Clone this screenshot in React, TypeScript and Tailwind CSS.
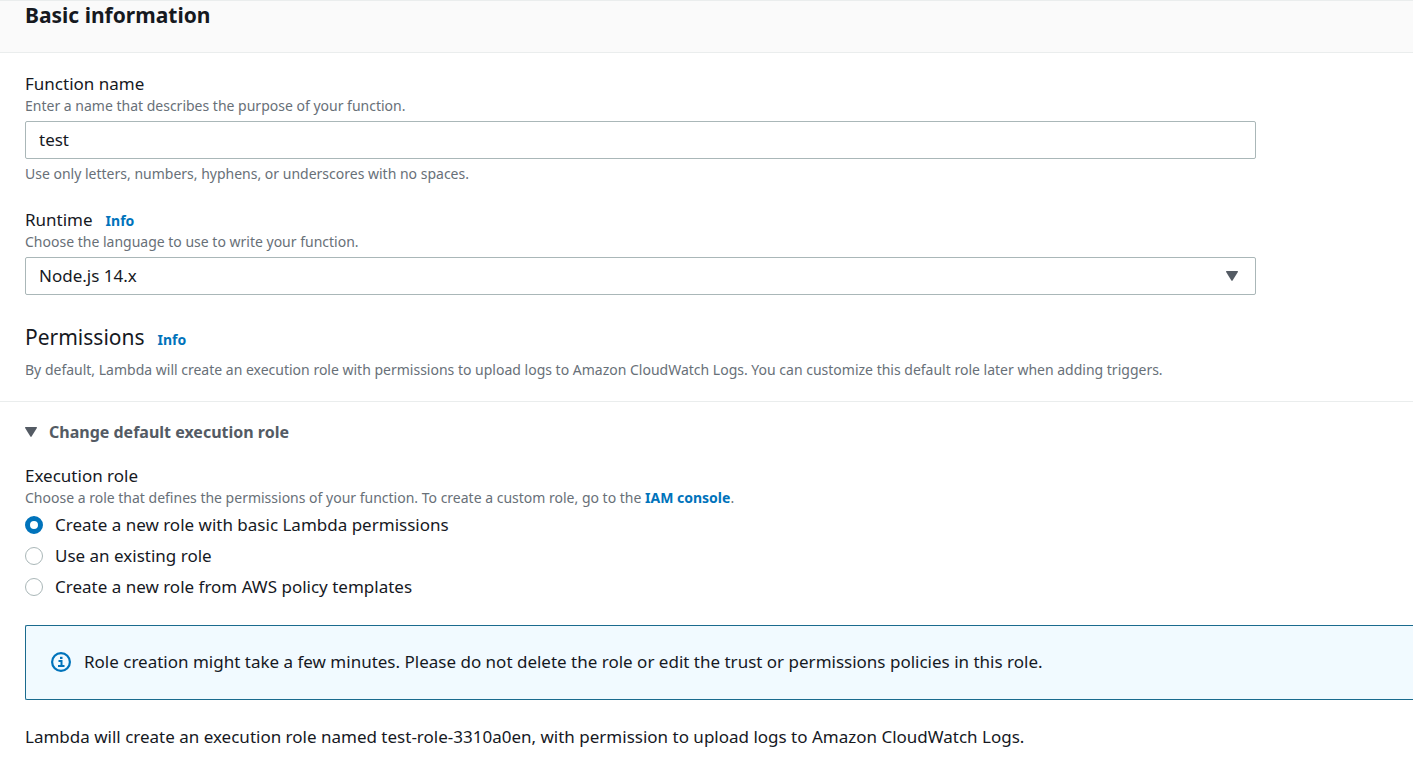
import { useState } from "react";
import type { ReactNode } from "react";

const roleOptions = [
  { id: "basic", label: "Create a new role with basic Lambda permissions" },
  { id: "existing", label: "Use an existing role" },
  { id: "template", label: "Create a new role from AWS policy templates" },
];

const runtimes = ["Node.js 14.x", "Node.js 12.x", "Python 3.9", "Java 11"];

function InfoLink() {
  return (
    <a href="#info" className="text-sm leading-[22px] font-bold text-[#0073bb]">
      Info
    </a>
  );
}

function Hint({ id, children }: { id?: string; children: ReactNode }) {
  return (
    <p id={id} className="text-sm leading-[22px] text-[#687078]">
      {children}
    </p>
  );
}

function Caret() {
  return (
    <svg width="12" height="12" viewBox="0 0 12 12" fill="#545b64" aria-hidden="true">
      <path d="M.6 1h10.8c.5 0 .7.5.5.9L6.6 10.6c-.3.4-.9.4-1.2 0L.1 1.9C-.1 1.5.1 1 .6 1z" />
    </svg>
  );
}

function InfoIcon() {
  return (
    <svg width="20" height="20" viewBox="0 0 20 20" fill="none" stroke="#0073bb" aria-hidden="true">
      <circle cx="10" cy="10" r="8.9" strokeWidth="2.2" />
      <path d="M7.5 9h3v5M7 14h6.5" strokeWidth="2" />
      <path d="M9 5.9h2.5" strokeWidth="2.2" />
    </svg>
  );
}

function App() {
  const [name, setName] = useState("test");
  const [runtime, setRuntime] = useState(runtimes[0]);
  const [role, setRole] = useState("basic");
  const [open, setOpen] = useState(true);

  return (
    <div className="min-h-screen bg-white font-['Noto_Sans',sans-serif] text-[17px] leading-[22px] text-[#16191f]">
      <header className="border-t border-b border-[#eaeded] bg-[#fafafa] px-[25px] pb-[23px]">
        <h2 className="text-[21px] leading-7 font-bold">Basic information</h2>
      </header>

      <section className="flex flex-col gap-6 px-[25px] pt-5">
        <div>
          <label htmlFor="name" className="block">
            Function name
          </label>
          <Hint id="name-desc">Enter a name that describes the purpose of your function.</Hint>
          <input
            id="name"
            type="text"
            aria-describedby="name-desc"
            className="my-1 block h-[38px] w-full max-w-[1231px] rounded-xs border border-[#aab7b8] px-[13px] pb-0.5 outline-none"
            value={name}
            onChange={(e) => setName(e.target.value)}
          />
          <Hint>Use only letters, numbers, hyphens, or underscores with no spaces.</Hint>
        </div>

        <div>
          <div className="flex h-[22px] items-baseline gap-[13px]">
            <label htmlFor="runtime">Runtime</label>
            <InfoLink />
          </div>
          <Hint>Choose the language to use to write your function.</Hint>
          <div className="mt-1 grid max-w-[1231px] items-center">
            <select
              id="runtime"
              className="col-start-1 row-start-1 h-[38px] w-full appearance-none rounded-xs border border-[#aab7b8] bg-white px-[13px] outline-none"
              value={runtime}
              onChange={(e) => setRuntime(e.target.value)}
            >
              {runtimes.map((r) => (
                <option key={r}>{r}</option>
              ))}
            </select>
            <span className="pointer-events-none col-start-1 row-start-1 mr-[18px] justify-self-end">
              <Caret />
            </span>
          </div>
        </div>
      </section>

      <section className="mt-[26px] border-b border-[#eaeded] px-[25px] pb-5">
        <div className="flex items-baseline gap-[13px]">
          <h3 className="text-[21px] leading-8">Permissions</h3>
          <InfoLink />
        </div>
        <div className="mt-1.5">
          <Hint>
            By default, Lambda will create an execution role with permissions to upload logs to
            Amazon CloudWatch Logs. You can customize this default role later when adding triggers.
          </Hint>
        </div>
      </section>

      <section className="pt-[19px] pb-6 pl-[25px]">
        <button
          type="button"
          aria-expanded={open}
          className="flex items-center gap-3 text-base leading-[22px] font-bold text-[#545b64]"
          onClick={() => setOpen(!open)}
        >
          <Caret />
          Change default execution role
        </button>

        {open && (
          <>
            <fieldset className="mt-[22px]">
              <legend>Execution role</legend>
              <Hint>
                Choose a role that defines the permissions of your function. To create a custom
                role, go to the{" "}
                <a href="#iam" className="font-bold text-[#0073bb]">
                  IAM console
                </a>
                .
              </Hint>
              <div className="mt-[5px] flex flex-col gap-[9px]">
                {roleOptions.map((o) => (
                  <label key={o.id} className="flex items-center gap-3">
                    <input
                      type="radio"
                      name="role"
                      className="size-[18px] appearance-none rounded-full border border-[#aab7b8] bg-white checked:border-[5px] checked:border-[#0073bb]"
                      checked={role === o.id}
                      onChange={() => setRole(o.id)}
                    />
                    {o.label}
                  </label>
                ))}
              </div>
            </fieldset>

            <div
              role="status"
              className="mt-[27px] flex items-center gap-[13px] rounded-l-xs border border-r-0 border-[#1a6b8e] bg-[#f1faff] px-[25px] pt-[25px] pb-[26px]"
            >
              <InfoIcon />
              <p>
                Role creation might take a few minutes. Please do not delete the role or edit the
                trust or permissions policies in this role.
              </p>
            </div>

            <p className="mt-[26px]">
              Lambda will create an execution role named test-role-3310a0en, with permission to
              upload logs to Amazon CloudWatch Logs.
            </p>
          </>
        )}
      </section>
    </div>
  );
}

export default App;
